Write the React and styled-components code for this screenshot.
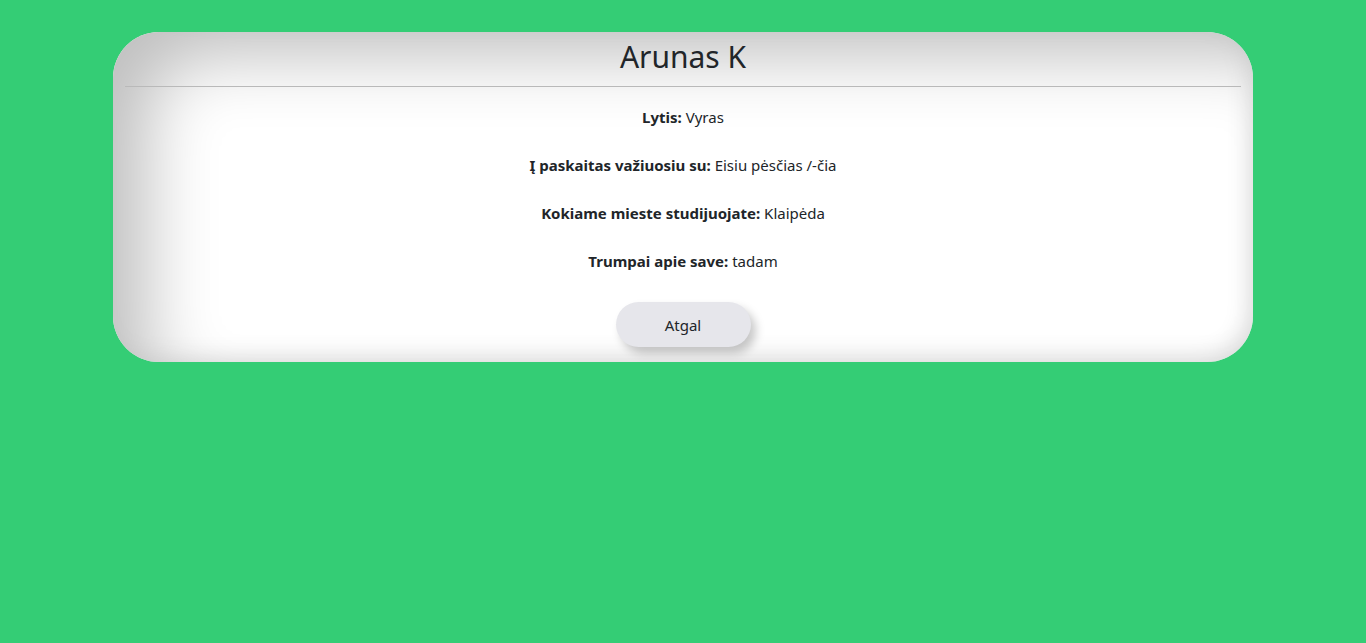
import React from 'react';
import styled, { createGlobalStyle } from 'styled-components';

const GlobalStyle = createGlobalStyle`
  html, body {
    margin: 0;
    padding: 0;
    background: #34cd75;
    font-family: "Noto Sans", "Open Sans", sans-serif;
    color: #212529;
  }
`;

const Page = styled.div`
  min-height: 643px;
  padding-top: 32px;
  box-sizing: border-box;
`;

const Card = styled.div`
  width: 1140px;
  margin: 0 auto;
  background: #fff;
  border-radius: 46px;
  padding: 0 12px 15px;
  box-sizing: border-box;
  box-shadow: inset 45px 34px 70px -10px #c0c0c0, inset -6px -6px 25px -4px #d8d8d8;
  text-align: center;
`;

const Name = styled.h2`
  margin: 0;
  padding-top: 3px;
  font-size: 30px;
  font-weight: 400;
  line-height: 44px;
  height: 54px;
  box-sizing: border-box;
`;

const Divider = styled.hr`
  margin: 0 0 18px;
  border: 0;
  border-top: 1px solid #b9b9b9;
`;

const Row = styled.p`
  margin: 0 0 24px;
  font-size: 15px;
  line-height: 24px;
`;

const Label = styled.strong`
  font-weight: 700;
`;

const Back = styled.button`
  margin-top: 5px;
  width: 135px;
  height: 45px;
  border: 0;
  border-radius: 23px;
  background: #e6e6eb;
  color: #212529;
  font-family: inherit;
  font-size: 15px;
  box-shadow: 5px 6px 10px rgba(0, 0, 0, 0.22);
  cursor: pointer;
`;

const info = [
  ['Lytis:', 'Vyras'],
  ['Į paskaitas važiuosiu su:', 'Eisiu pėsčias /-čia'],
  ['Kokiame mieste studijuojate:', 'Klaipėda'],
  ['Trumpai apie save:', 'tadam'],
];

export default function App() {
  return (
    <Page>
      <GlobalStyle />
      <Card>
        <Name>Arunas K</Name>
        <Divider />
        {info.map(([label, value]) => (
          <Row key={label}>
            <Label>{label}</Label> {value}
          </Row>
        ))}
        <Back>Atgal</Back>
      </Card>
    </Page>
  );
}
